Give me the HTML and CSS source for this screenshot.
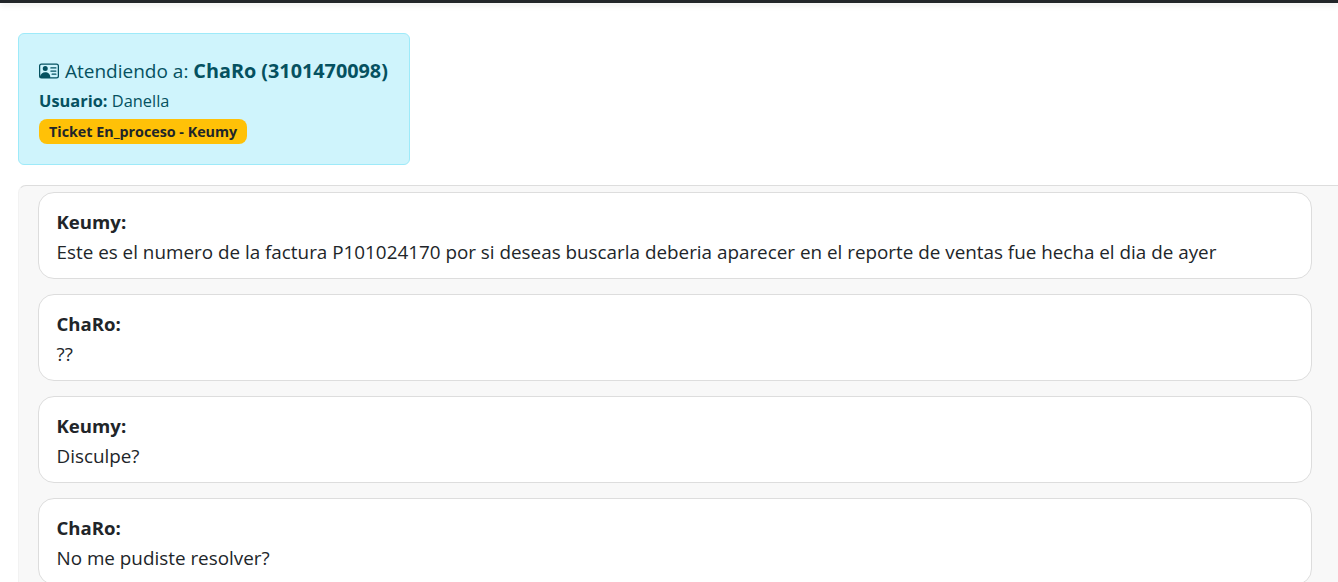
FILE: index.html
```html
<!DOCTYPE html>
<html lang="es">
<head>
<meta charset="utf-8">
<title>Chat</title>
<link rel="stylesheet" href="styles.css">
</head>
<body>
<div class="topbar"></div>
<main class="page">
  <section class="alert">
    <h5 class="title">
      <svg class="icon" viewBox="0 0 16 16" fill="currentColor" aria-hidden="true"><path d="M5 8a2 2 0 1 0 0-4 2 2 0 0 0 0 4Zm4-2.5a.5.5 0 0 1 .5-.5h4a.5.5 0 0 1 0 1h-4a.5.5 0 0 1-.5-.5ZM9 8a.5.5 0 0 1 .5-.5h4a.5.5 0 0 1 0 1h-4A.5.5 0 0 1 9 8Zm1 2.5a.5.5 0 0 1 .5-.5h3a.5.5 0 0 1 0 1h-3a.5.5 0 0 1-.5-.5Z"/><path d="M2 2a2 2 0 0 0-2 2v8a2 2 0 0 0 2 2h12a2 2 0 0 0 2-2V4a2 2 0 0 0-2-2H2ZM1 4a1 1 0 0 1 1-1h12a1 1 0 0 1 1 1v8a1 1 0 0 1-1 1H8.96c.026-.163.04-.33.04-.5C9 10.567 7.21 9 5 9c-2.086 0-3.8 1.398-3.984 3.181A1 1 0 0 1 1 12V4Z"/></svg>
      <span class="title-text">Atendiendo a: <strong>ChaRo (3101470098)</strong></span>
    </h5>
    <p class="user"><strong>Usuario:</strong> Danella</p>
    <span class="badge">Ticket En_proceso - Keumy</span>
  </section>
  <section class="chat">
    <article class="msg"><strong>Keumy:</strong><p>Este es el numero de la factura P101024170 por si deseas buscarla deberia aparecer en el reporte de ventas fue hecha el dia de ayer</p></article>
    <article class="msg"><strong>ChaRo:</strong><p>??</p></article>
    <article class="msg"><strong>Keumy:</strong><p>Disculpe?</p></article>
    <article class="msg"><strong>ChaRo:</strong><p>No me pudiste resolver?</p></article>
  </section>
</main>
</body>
</html>
```
FILE: styles.css
```css
* { box-sizing: border-box; }
html, body { margin: 0; height: 100%; overflow: hidden; background: #fff; }
body { font-family: "Open Sans", "Liberation Sans", sans-serif; color: #212529; font-size: 18.85px; line-height: 30px; }
.topbar { height: 3px; background: #212529; box-shadow: 0 2px 6px rgba(0,0,0,.12); }
.page { padding: 30px 0 0 18px; }
.alert { width: 392px; height: 132px; padding: 20px; background: #cff4fc; border: 1px solid #9eeaf9; border-radius: 6px; color: #055160; }
.title { margin: 0; font-size: 19px; font-weight: 400; line-height: 34px; white-space: nowrap; display: flex; align-items: center; gap: 6px; }
.title strong { font-size: 19.8px; }
.icon { width: 20px; height: 20px; flex: none; }
.user { margin: 0; font-size: 16.4px; line-height: 26px; }
.badge { display: block; width: fit-content; margin-top: 5px; background: #ffc107; color: #212529; font-size: 14.3px; font-weight: 700; line-height: 25px; height: 25px; padding: 0 10px; border-radius: 8px; white-space: nowrap; }
.chat { margin-top: 20px; background: #f8f8f8; border-top: 1px solid #ddd; border-left: 1px solid #f2f2f2; border-top-left-radius: 8px; padding: 6px 26px 0 19px; display: flex; flex-direction: column; gap: 15px; }
.msg { height: 87px; padding: 14px 18px 0 17.5px; background: #fff; border: 1px solid #ddd; border-radius: 16px; }
.msg strong { display: block; font-size: 18.6px; line-height: 30px; }
.msg p { margin: 0; line-height: 31px; }
```
